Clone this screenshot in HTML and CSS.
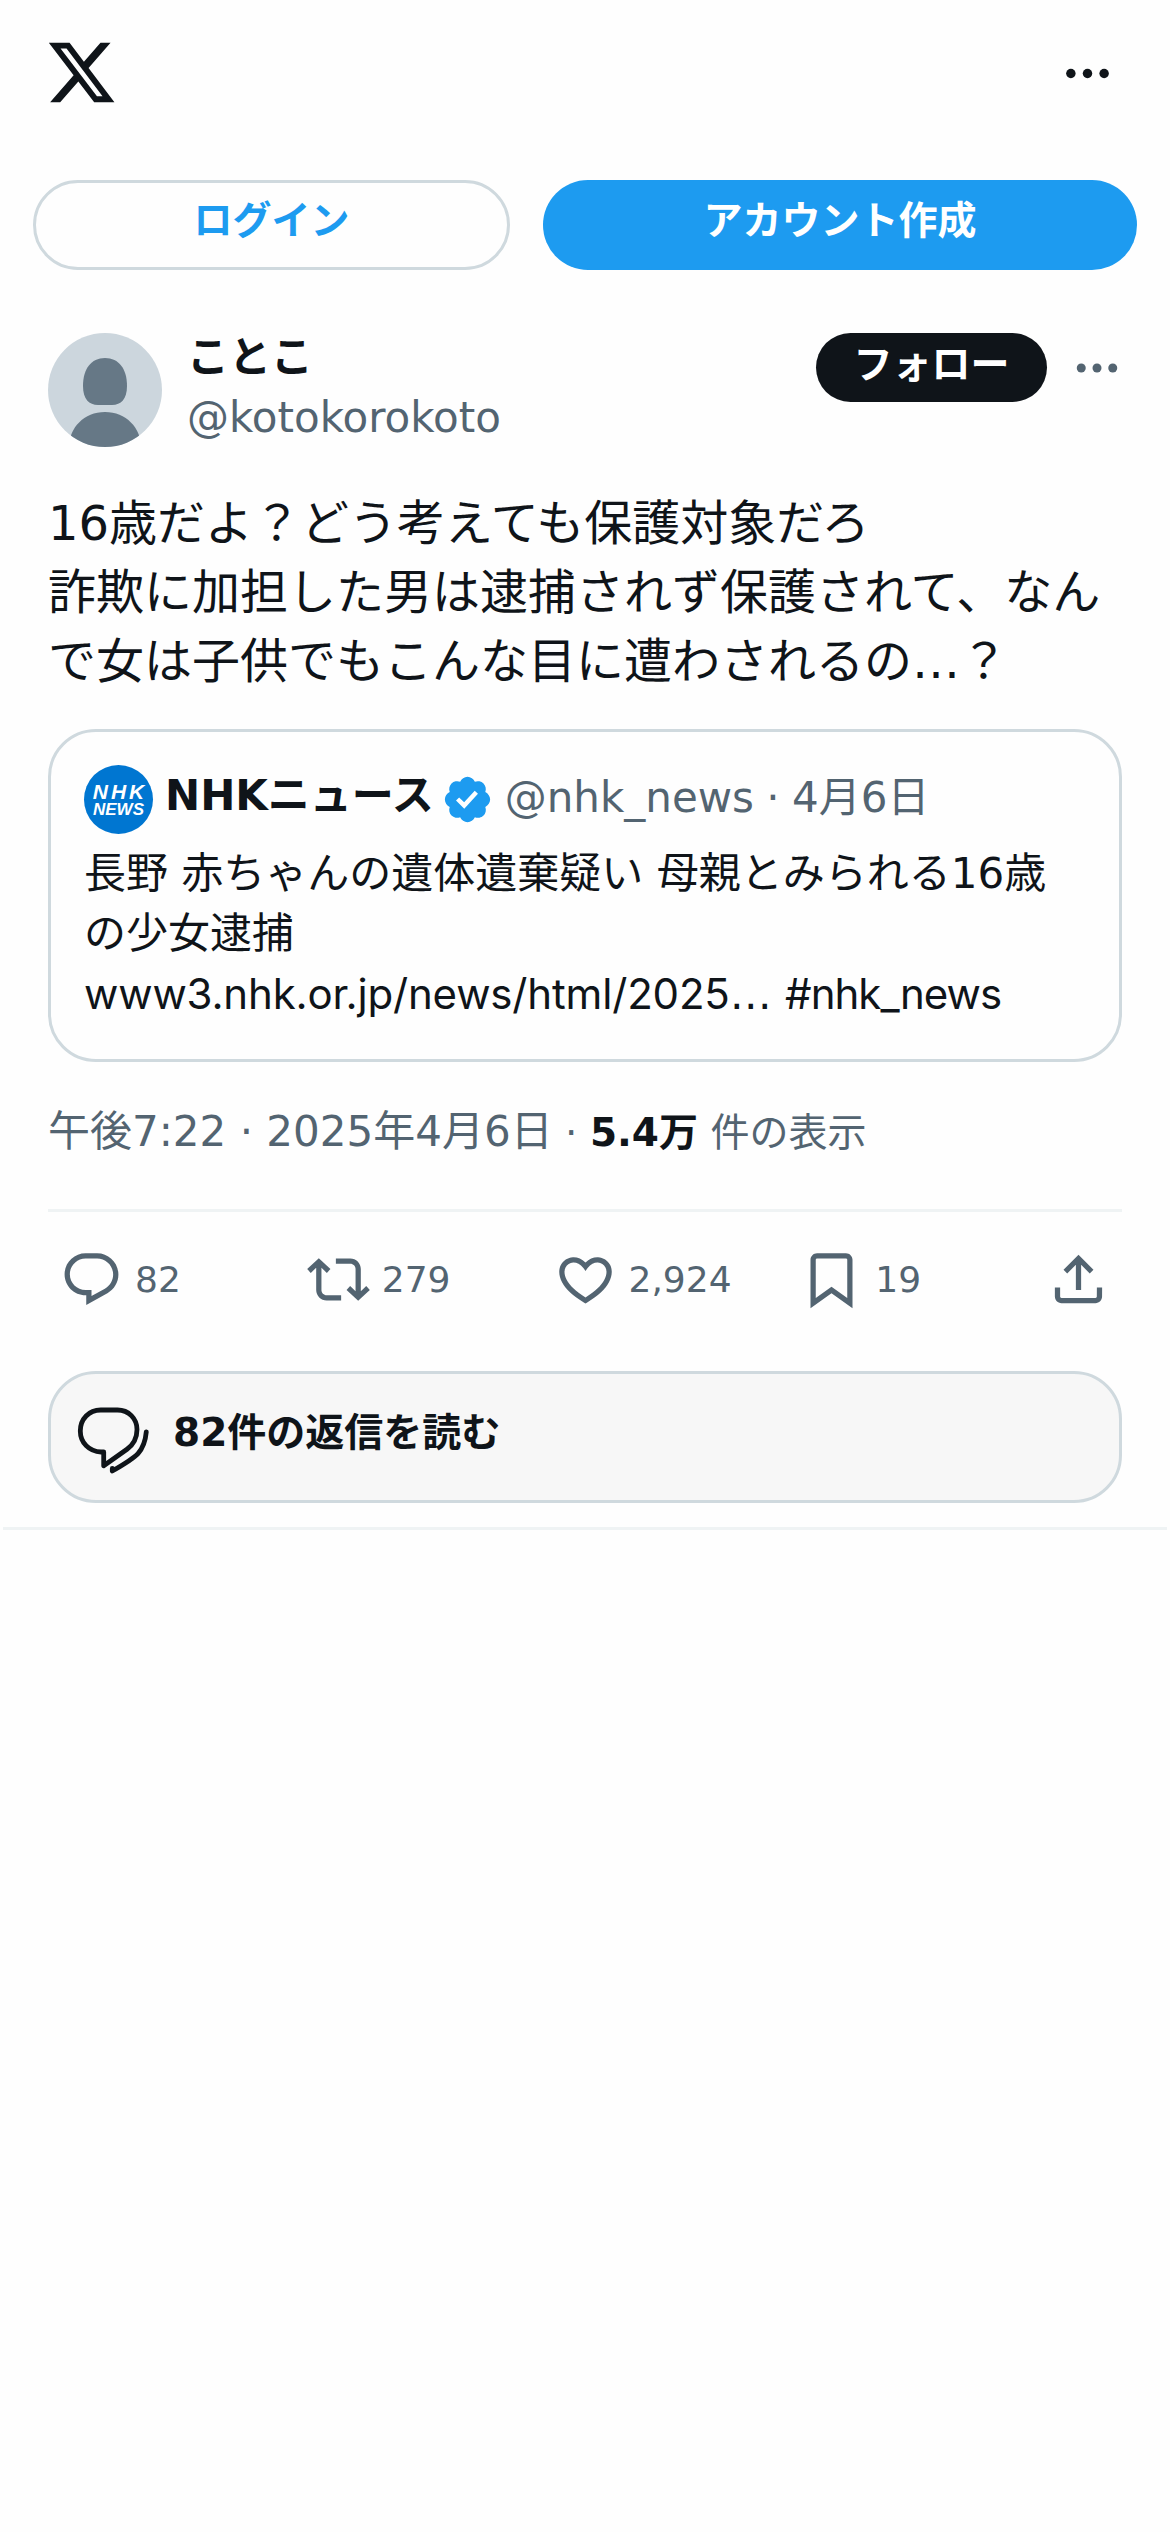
FILE: index.html
```html
<!DOCTYPE html>
<html lang="ja">
<head>
<meta charset="utf-8">
<title>ことこ (@kotokorokoto)</title>
<link rel="stylesheet" href="styles.css">
</head>
<body>
<header class="topbar">
  <svg class="logo" viewBox="0 0 24 24"><path d="M18.244 2.25h3.308l-7.227 8.26 8.502 11.24H16.17l-5.214-6.817L4.99 21.75H1.68l7.73-8.835L1.254 2.25H8.08l4.713 6.231zm-1.161 17.52h1.833L7.084 4.126H5.117z"/></svg>
  <svg class="menu" viewBox="0 0 24 24"><circle cx="5" cy="12" r="2"/><circle cx="12" cy="12" r="2"/><circle cx="19" cy="12" r="2"/></svg>
</header>
<nav class="auth">
  <a class="btn login">ログイン</a>
  <a class="btn signup">アカウント作成</a>
</nav>
<article class="post">
  <div class="author">
    <svg class="avatar" viewBox="0 0 114 114"><defs><clipPath id="round"><circle cx="57" cy="57" r="57"/></clipPath></defs><g clip-path="url(#round)"><rect width="114" height="114" fill="#ccd6dd"/><path d="M57 25c14 0 22 11 22 28 0 13-6 19-15 19H50c-9 0-15-6-15-19 0-17 8-28 22-28z" fill="#667886"/><path d="M21 114c0-19 15-35 36-35s36 16 36 35z" fill="#667886"/></g></svg>
    <div class="names">
      <div class="name">ことこ</div>
      <div class="handle">@kotokorokoto</div>
    </div>
    <a class="follow">フォロー</a>
    <svg class="more" viewBox="0 0 24 24"><circle cx="5" cy="12" r="2"/><circle cx="12" cy="12" r="2"/><circle cx="19" cy="12" r="2"/></svg>
  </div>
  <p class="text">16歳だよ？どう考えても保護対象だろ<br>詐欺に加担した男は逮捕されず保護されて、なんで女は子供でもこんな目に遭わされるの…？</p>
  <section class="quote">
    <div class="quote-head">
      <div class="nhk"><span class="nhk-top">NHK</span><span class="nhk-bottom">NEWS</span></div>
      <span class="quote-name">NHKニュース</span>
      <svg class="badge" viewBox="0 0 22 22"><path d="M20.396 11c-.018-.646-.215-1.275-.57-1.816-.354-.54-.852-.972-1.438-1.246.223-.607.27-1.264.14-1.897-.131-.634-.437-1.218-.882-1.687-.47-.445-1.053-.75-1.687-.882-.633-.13-1.29-.083-1.897.14-.273-.587-.704-1.086-1.245-1.44S11.647 1.62 11 1.604c-.646.017-1.273.213-1.813.568s-.969.854-1.24 1.44c-.608-.223-1.267-.272-1.902-.14-.635.13-1.22.436-1.69.882-.445.47-.749 1.055-.878 1.688-.13.633-.08 1.29.144 1.896-.587.274-1.087.705-1.443 1.245-.356.54-.555 1.17-.574 1.817.02.647.218 1.276.574 1.817.356.54.856.972 1.443 1.245-.224.606-.274 1.263-.144 1.896.13.634.433 1.218.877 1.688.47.443 1.054.747 1.687.878.633.132 1.29.084 1.897-.136.274.586.705 1.084 1.246 1.439.54.354 1.17.551 1.816.569.647-.016 1.276-.213 1.817-.567s.972-.854 1.245-1.44c.604.239 1.266.296 1.903.164.636-.132 1.22-.447 1.68-.907.46-.46.776-1.044.908-1.681s.075-1.299-.165-1.903c.586-.274 1.084-.705 1.439-1.246.354-.54.551-1.17.569-1.816zM9.662 14.85l-3.429-3.428 1.293-1.302 2.072 2.072 4.4-4.794 1.347 1.246z"/></svg>
      <span class="quote-meta">@nhk_news · 4月6日</span>
    </div>
    <p class="quote-text">長野 赤ちゃんの遺体遺棄疑い 母親とみられる16歳の少女逮捕<br><span class="url">www3.nhk.or.jp/news/html/2025</span>… <span class="hashtag">#nhk_news</span></p>
  </section>
  <div class="stamp">午後7:22 · 2025年4月6日<span class="views"> · <b>5.4万</b> 件の表示</span></div>
  <div class="actions">
    <span class="action"><svg viewBox="0 0 24 24"><path d="M1.751 10c0-4.42 3.584-8 8.005-8h4.366c4.49 0 8.129 3.64 8.129 8.13 0 2.96-1.607 5.68-4.196 7.11l-8.054 4.46v-3.69h-.067c-4.49.1-8.183-3.51-8.183-8.01zm8.005-6c-3.317 0-6.005 2.69-6.005 6 0 3.37 2.77 6.08 6.138 6.01l.351-.01h1.761v2.3l5.087-2.81c1.951-1.08 3.163-3.13 3.163-5.36 0-3.39-2.744-6.13-6.129-6.13H9.756z"/></svg>82</span>
    <span class="action"><svg viewBox="0 0 24 24"><path d="M4.5 3.88l4.432 4.14-1.364 1.46L5.5 7.55V16c0 1.1.896 2 2 2H13v2H7.5c-2.209 0-4-1.79-4-4V7.55L1.432 9.48.068 8.02 4.5 3.88zM16.5 6H11V4h5.5c2.209 0 4 1.79 4 4v8.45l2.068-1.93 1.364 1.46-4.432 4.14-4.432-4.14 1.364-1.46 2.068 1.93V8c0-1.1-.896-2-2-2z"/></svg>279</span>
    <span class="action"><svg viewBox="0 0 24 24"><path d="M16.697 5.5c-1.222-.06-2.679.51-3.89 2.16l-.805 1.09-.806-1.09C9.984 6.01 8.526 5.44 7.304 5.5c-1.243.07-2.349.78-2.91 1.91-.552 1.12-.633 2.78.479 4.82 1.074 1.97 3.257 4.27 7.129 6.61 3.87-2.34 6.052-4.64 7.126-6.61 1.111-2.04 1.03-3.7.477-4.82-.561-1.13-1.666-1.84-2.908-1.91zm4.187 7.69c-1.351 2.48-4.001 5.12-8.379 7.67l-.503.3-.504-.3c-4.379-2.55-7.029-5.19-8.382-7.67-1.36-2.5-1.41-4.86-.514-6.67.887-1.79 2.647-2.91 4.601-3.01 1.651-.09 3.368.56 4.798 2.01 1.429-1.45 3.146-2.1 4.796-2.01 1.954.1 3.714 1.22 4.601 3.01.896 1.81.846 4.17-.514 6.67z"/></svg>2,924</span>
    <span class="action"><svg viewBox="0 0 24 24"><path d="M4 4.5C4 3.12 5.119 2 6.5 2h11C18.881 2 20 3.12 20 4.5v18.44l-8-5.71-8 5.71V4.5zM6.5 4c-.276 0-.5.22-.5.5v14.56l6-4.29 6 4.29V4.5c0-.28-.224-.5-.5-.5h-11z"/></svg>19</span>
    <span class="action share"><svg viewBox="0 0 24 24"><path d="M12 2.59l5.7 5.7-1.41 1.42L13 6.41V16h-2V6.41l-3.3 3.3-1.41-1.42L12 2.59zM21 15l-.02 3.51c0 1.38-1.12 2.49-2.5 2.49H5.5C4.11 21 3 19.88 3 18.5V15h2v3.5c0 .28.22.5.5.5h12.98c.28 0 .5-.22.5-.5L19 15h2z"/></svg></span>
  </div>
  <a class="replies">
    <svg viewBox="0 0 75 75"><path d="M25.7 6H42.5C53.500 6 62 14.500 62 25.500c0 8.500-3.500 15-10 19.800L28.700 61.800V48H26C14 47.700 5.300 38.500 5.300 27 5.300 15 14 6 25.700 6z"/><path d="M71.300 27.800c-.8 9-3.300 16.200-8.300 21.800C58 55 46 62 37.300 67v-2.500"/></svg>
    <span>82件の返信を読む</span>
  </a>
</article>
</body>
</html>
```
FILE: styles.css
```css
* { box-sizing: border-box; }
body { margin: 0; background: #fefefe; color: #0f1419; font-family: "DejaVu Sans", "Noto Sans CJK JP", sans-serif; }
p { margin: 0; }
svg { display: block; flex: none; }
.topbar { height: 180px; padding: 36px 54px 0 45px; display: flex; justify-content: space-between; align-items: flex-start; }
.logo { width: 73px; height: 73px; fill: #0f1419; }
.menu { width: 57px; height: 57px; margin-top: 9px; fill: #0f1419; }
.auth { display: flex; gap: 33px; padding: 0 33px; }
.btn { height: 90px; border-radius: 45px; font-size: 39px; font-weight: 700; line-height: 82px; text-align: center; }
.login { width: 477px; border: 3px solid #cfd9de; color: #1d9bf0; line-height: 76px; }
.signup { flex: 1; background: #1d9bf0; color: #fff; }
.post { margin: 63px 3px 0; padding: 0 45px 24px; border-bottom: 3px solid #eff3f4; }
.author { display: flex; height: 114px; }
.avatar { width: 114px; height: 114px; }
.names { flex: 1; padding-left: 25px; font-size: 42px; }
.name { font-weight: 700; line-height: 50px; }
.handle { color: #536471; line-height: 69px; }
.follow { width: 231px; height: 69px; border-radius: 35px; background: #0f1419; color: #fff; font-size: 39px; font-weight: 700; line-height: 63px; text-align: center; }
.more { width: 54px; height: 54px; margin: 8px -2px 0 23px; fill: #536471; }
.text { margin-top: 42px; font-size: 48px; line-height: 69px; }
.quote { height: 333px; margin-top: 33px; padding: 33px 33px 0; border: 3px solid #cfd9de; border-radius: 48px; }
.quote-head { display: flex; height: 72px; font-size: 42px; line-height: 66px; white-space: nowrap; }
.nhk { display: flex; flex-direction: column; align-items: center; width: 69px; height: 69px; padding-top: 17px; border-radius: 50%; background: #0076d1; color: #fff; font: italic 700 21px/20px "Liberation Sans", sans-serif; }
.nhk-top { padding-left: 3px; letter-spacing: 3px; }
.nhk-bottom { font-size: 17px; line-height: 16px; }
.quote-name { margin-left: 12px; font-weight: 700; line-height: 62px; }
.badge { width: 53px; height: 53px; margin: 8px 11px 0 7px; fill: #1d9bf0; }
.quote-meta { color: #536471; word-spacing: -1px; }
.quote-text { margin-top: 7px; font-size: 42px; line-height: 60px; }
.url { font-family: Inter, sans-serif; letter-spacing: -.17px; }
.hashtag { font-family: Inter, sans-serif; letter-spacing: -1px; }
.stamp { height: 150px; padding-top: 40px; border-bottom: 3px solid #eff3f4; color: #536471; font-size: 42px; line-height: 60px; }
.views { font-size: 39px; }
.views b { color: #0f1419; }
.actions { display: flex; padding: 36px 12px 0; color: #536471; font-size: 36px; line-height: 64px; height: 99px; }
.action { display: flex; gap: 12px; flex: 1; }
.action svg { width: 63px; height: 63px; fill: #536471; }
.share { flex: none; }
.replies { display: flex; height: 132px; margin-top: 60px; padding: 30px 24px 0; border: 3px solid #cfd9de; border-radius: 48px; background: #f7f7f7; font-size: 39px; font-weight: 700; line-height: 57px; gap: 23px; }
.replies svg { width: 75px; height: 75px; fill: none; stroke: #0f1419; stroke-width: 4.8; stroke-linecap: round; stroke-linejoin: round; }
```
